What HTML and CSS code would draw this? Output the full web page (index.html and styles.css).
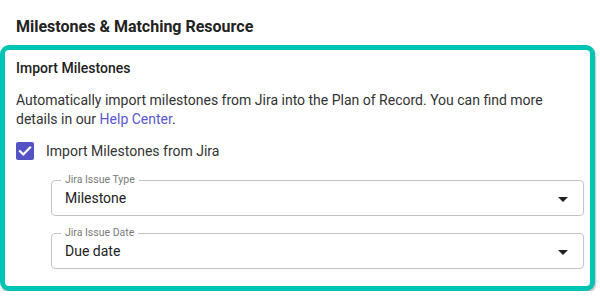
FILE: index.html
```html
<!DOCTYPE html>
<html>
<head>
  <meta charset="utf-8">
  <title>Milestones &amp; Matching Resource</title>
  <link rel="stylesheet" href="styles.css">
</head>
<body>
  <div class="page">
    <h1 class="page-title">Milestones &amp; Matching Resource</h1>

    <div class="card highlighted">
      <h2>Import Milestones</h2>
      <p class="description">
        Automatically import milestones from Jira into the Plan of Record. You can find more
        details in our <a href="#">Help Center</a>.
      </p>

      <label class="checkbox-item">
        <span class="checkbox checked">
          <svg viewBox="0 0 18 18" width="18" height="18">
            <path d="M4 9.2l3.3 3.2L14 5.6" fill="none" stroke="#fff" stroke-width="2.2" stroke-linecap="square"/>
          </svg>
        </span>
        <span>Import Milestones from Jira</span>
      </label>

      <div class="fields">
        <div class="select-field">
          <span class="field-label">Jira Issue Type</span>
          <span class="select-value">Milestone</span>
          <span class="arrow"></span>
        </div>

        <div class="select-field">
          <span class="field-label">Jira Issue Date</span>
          <span class="select-value">Due date</span>
          <span class="arrow"></span>
        </div>
      </div>
    </div>
  </div>
</body>
</html>
```

FILE: styles.css
```css
body {
  font-family: Roboto, "Liberation Sans", sans-serif;
  margin: 0;
  background: #fff;
  color: #2b2b2b;
}

.page {
  padding: 0 5px 0 0;
}

.page-title {
  margin: 0;
  padding: 17px 16px 0 16px;
  height: 28px;
  font-size: 16px;
  font-weight: 700;
  color: #222;
  line-height: 20px;
}

.card {
  background: white;
  border: 5px solid #00c4b3;
  border-radius: 9px;
  padding: 8px 6px 17px 11px;
  box-shadow: 1px 2px 2px rgba(0, 0, 0, 0.25);
}

.card h2 {
  margin: 0;
  font-size: 14px;
  font-weight: 500;
  line-height: 20px;
  color: #222;
}

.description {
  margin: 13px 0 0 0;
  font-size: 14px;
  line-height: 19px;
  color: #333;
}

.description a {
  color: #5a57d1;
  text-decoration: none;
}

.checkbox-item {
  display: flex;
  align-items: center;
  margin-top: 13px;
  font-size: 14px;
  line-height: 18px;
  color: #333;
}

.checkbox {
  width: 18px;
  height: 18px;
  border-radius: 2px;
  background: #5552c6;
  margin-right: 12px;
  display: flex;
}

.fields {
  display: flex;
  flex-direction: column;
  gap: 17px;
  padding: 20px 0 0 35px;
}

.select-field {
  position: relative;
  display: flex;
  align-items: center;
  justify-content: space-between;
  height: 36px;
  box-sizing: border-box;
  padding: 0 15px 0 13px;
  border: 1px solid #c4c4c4;
  border-radius: 4px;
}

.field-label {
  position: absolute;
  top: -7px;
  left: 9px;
  padding: 0 4px;
  background: white;
  font-size: 10.5px;
  line-height: 12px;
  color: #7a7a7a;
}

.select-value {
  font-size: 14px;
  color: #222;
}

.arrow {
  width: 0;
  height: 0;
  border-left: 5px solid transparent;
  border-right: 5px solid transparent;
  border-top: 5px solid #222;
  margin-top: 2px;
}
```
